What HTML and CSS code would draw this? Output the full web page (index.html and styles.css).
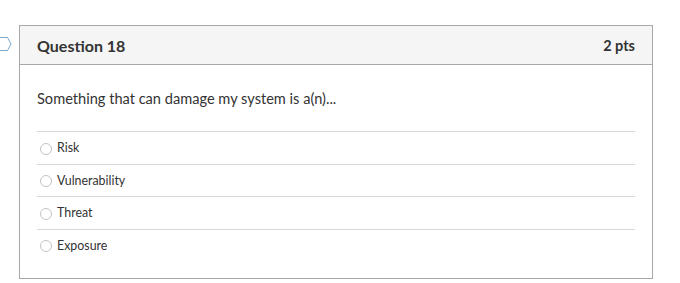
FILE: index.html
```html
<!DOCTYPE html>
<html>
<head>
<meta charset="utf-8">
<link rel="stylesheet" href="styles.css">
</head>
<body>
<div class="page">
  <svg class="flag" width="12" height="14" viewBox="0 0 12 14"><path d="M-2 0.5 H7.5 L11 7 L7.5 13.5 H-2 Z" fill="#fff" stroke="#7fa9cc" stroke-width="1"/></svg>
  <div class="card">
    <div class="card-header">
      <span class="title">Question 18</span>
      <span class="pts">2 pts</span>
    </div>
    <div class="card-body">
      <p class="question">Something that can damage my system is a(n)...</p>
      <ul class="answers">
        <li class="answer"><span class="radio"></span>Risk</li>
        <li class="answer"><span class="radio"></span>Vulnerability</li>
        <li class="answer"><span class="radio"></span>Threat</li>
        <li class="answer"><span class="radio"></span>Exposure</li>
      </ul>
    </div>
  </div>
</div>
</body>
</html>
```
FILE: styles.css
```css
html, body { margin: 0; padding: 0; background: #fff; }
body { font-family: Lato, "Liberation Sans", sans-serif; color: #2d3b45; }
.page { position: relative; padding: 25px 0 0 19px; }
.flag { position: absolute; left: 0; top: 37px; }
.card { width: 634px; box-sizing: border-box; border: 1px solid #a8a8a8; background: #fff; }
.card-header { display: flex; justify-content: space-between; align-items: center; height: 38px; padding: 0 17px 0 17px; background: #f5f5f5; border-bottom: 1px solid #a8a8a8; }
.title { font-size: 16px; font-weight: bold; color: #333; }
.pts { font-size: 14.5px; font-weight: bold; color: #333; }
.card-body { padding: 24px 17px 17px 17px; }
.question { margin: 0 0 22px 0; font-size: 14.6px; line-height: 20px; color: #333; }
.answers { list-style: none; margin: 0; padding: 0; }
.answer { display: flex; align-items: center; height: 31.5px; border-top: 1px solid #d8d8d8; font-size: 12.4px; color: #333; }
.radio { width: 12px; height: 12px; border: 1px solid #c4c4c4; border-radius: 50%; margin: 2px 5px 0 3px; box-sizing: border-box; }
```
